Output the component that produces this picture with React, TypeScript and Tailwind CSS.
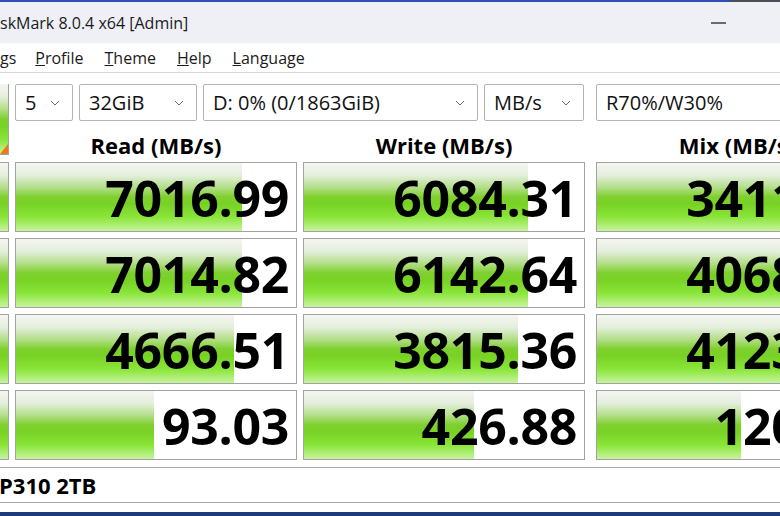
import React from 'react';

const FILL =
  'bg-[linear-gradient(180deg,#f4f5f2_0%,#e4efdc_18%,#b2de88_36%,#7fd02e_50%,#78d225_60%,#8be63a_80%,#c8f3a0_100%)]';

interface Cell {
  value: string;
  fill: number; // px of the bar, measured inside the border
}

const rows: Cell[][] = [
  [
    { value: '7016.99', fill: 226 },
    { value: '6084.31', fill: 224 },
    { value: '3411.62', fill: 999 },
  ],
  [
    { value: '7014.82', fill: 226 },
    { value: '6142.64', fill: 224 },
    { value: '4068.07', fill: 999 },
  ],
  [
    { value: '4666.51', fill: 218 },
    { value: '3815.36', fill: 214 },
    { value: '4123.45', fill: 999 },
  ],
  [
    { value: '93.03', fill: 138 },
    { value: '426.88', fill: 170 },
    { value: '120.47', fill: 144 },
  ],
];

const Chevron = () => (
  <svg width="10" height="6" viewBox="0 0 10 6" className="shrink-0">
    <path d="M1 1l4 4 4-4" fill="none" stroke="#6b6b6b" strokeWidth="1" />
  </svg>
);

const Select = ({ label, w, chevron = true }: { label: string; w: string; chevron?: boolean }) => (
  <div
    className={`${w} h-[37px] shrink-0 flex items-center justify-between pl-[9px] pr-[12px] border border-[#b4b4b4] rounded-[2px] bg-white text-[20px] text-[#111]`}
  >
    <span className="leading-none whitespace-nowrap">{label}</span>
    {chevron && <Chevron />}
  </div>
);

const Bar = ({ cell, w }: { cell: Cell; w: string }) => (
  <div className={`${w} relative h-[70px] shrink-0 border border-[#a2a2a2] bg-white overflow-hidden`}>
    <div className={`absolute inset-y-0 left-0 ${FILL}`} style={{ width: cell.fill }} />
    <div className="relative h-full flex items-center justify-end pr-[7px] pt-[2px] text-[50px] font-bold leading-none text-black tracking-[-0.3px]">
      {cell.value}
    </div>
  </div>
);

export default function App() {
  return (
    <div
      className="w-[780px] h-[516px] overflow-hidden bg-white flex flex-col"
      style={{ fontFamily: '"Open Sans", "Noto Sans", "Liberation Sans", sans-serif' }}
    >
      {/* window edge */}
      <div className="h-[2px] flex shrink-0">
        <div className="flex-1 bg-[#2e4fae]" />
        <div className="w-[50px] bg-[#4a4f5c]" />
      </div>

      {/* Title bar */}
      <div className="h-[41px] shrink-0 bg-[#eef0f6] flex items-center">
        <span className="text-[16px] text-[#1b1b1b] leading-none">skMark 8.0.4 x64 [Admin]</span>
        <div className="ml-auto mr-[54px] w-[15px] h-[2px] bg-[#6a6a6a]" />
      </div>

      {/* Menu */}
      <div className="h-[30px] shrink-0 flex items-center gap-[21px] text-[16px] text-[#1b1b1b] border-b border-[#d6d6d6]">
        <span>gs</span>
        <span className="ml-[-2px]"><u>P</u>rofile</span>
        <span><u>T</u>heme</span>
        <span><u>H</u>elp</span>
        <span><u>L</u>anguage</span>
      </div>

      {/* Controls + headers */}
      <div className="flex pt-[11px] shrink-0">
        <div className="relative w-[9px] h-[71px] shrink-0 border-r border-b border-[#a2a2a2] overflow-hidden">
          <div className={`absolute inset-0 ${FILL}`} />
          <div className="absolute right-0 bottom-0 w-0 h-0 border-l-[8px] border-l-transparent border-b-[10px] border-b-[#f07810]" />
        </div>
        <div className="flex flex-col ml-[6px]">
          <div className="flex gap-[6px]">
            <Select label="5" w="w-[58px]" />
            <Select label="32GiB" w="w-[118px]" />
            <Select label="D: 0% (0/1863GiB)" w="w-[275px]" />
            <Select label="MB/s" w="w-[100px]" />
            <div className="ml-[6px]">
              <Select label="R70%/W30%" w="w-[282px]" chevron={false} />
            </div>
          </div>
          <div className="flex h-[41px] items-center pt-[6px] font-bold text-[22px] leading-none text-black">
            <div className="w-[282px] text-center">Read (MB/s)</div>
            <div className="w-[282px] ml-[6px] text-center">Write (MB/s)</div>
            <div className="w-[282px] ml-[11px] text-center whitespace-nowrap">Mix (MB/s)</div>
          </div>
        </div>
      </div>

      {/* Results */}
      <div className="flex flex-col gap-[6px]">
        {rows.map((r, i) => (
          <div key={i} className="flex">
            <div className="relative w-[9px] h-[70px] shrink-0 border-y border-r border-[#a2a2a2] overflow-hidden">
              <div className={`absolute inset-0 ${FILL}`} />
            </div>
            <div className="ml-[6px]">
              <Bar cell={r[0]} w="w-[282px]" />
            </div>
            <div className="ml-[6px]">
              <Bar cell={r[1]} w="w-[282px]" />
            </div>
            <div className="ml-[11px]">
              <Bar cell={r[2]} w="w-[282px]" />
            </div>
          </div>
        ))}
      </div>

      {/* Comment box */}
      <div className="mt-[7px] h-[36px] shrink-0 border-y border-[#a8a8a8] flex items-center text-[22px] font-bold text-black">
        <span className="-ml-[1px] leading-none">P310 2TB</span>
      </div>
      <div className="flex-1" />
      <div className="h-[4px] shrink-0 bg-[#1d3a7a]" />
    </div>
  );
}
